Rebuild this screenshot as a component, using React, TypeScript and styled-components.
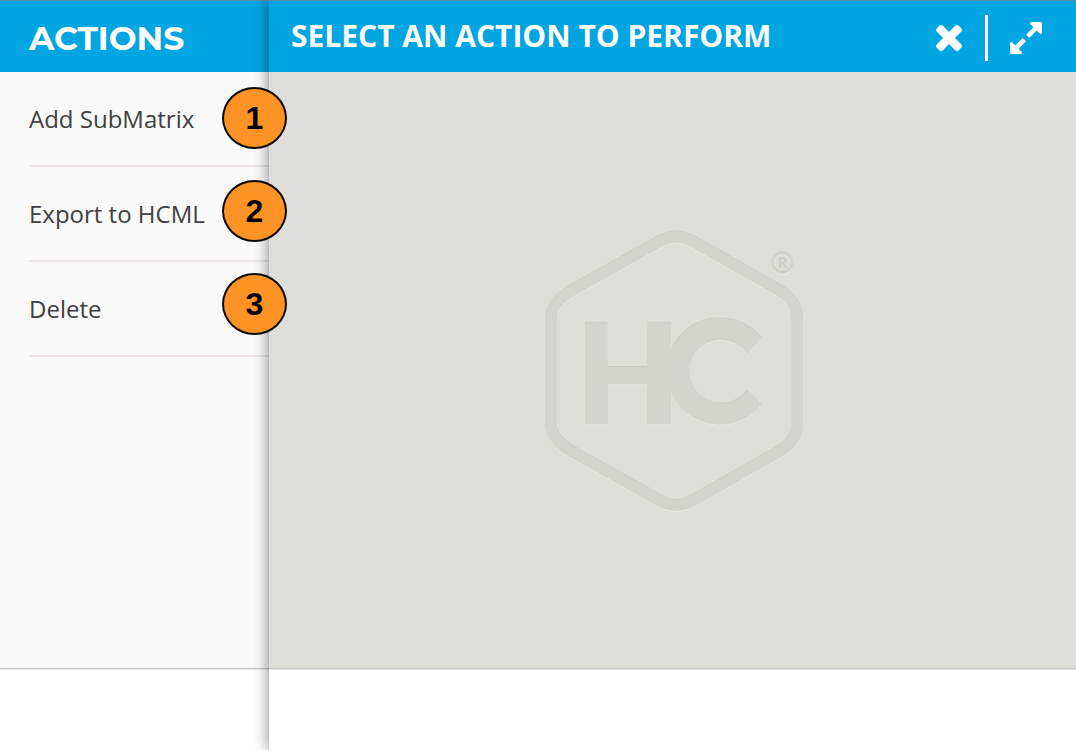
import React from "react";
import styled, { createGlobalStyle } from "styled-components";

const GlobalStyle = createGlobalStyle`
  *, *::before, *::after { box-sizing: border-box; }
  body {
    margin: 0;
    background: #ffffff;
    font-family: "Open Sans", "Noto Sans", sans-serif;
  }
`;

const Page = styled.div`
  display: grid;
  grid-template-columns: 25% 1fr;
  min-height: 100vh;
`;

const Column = styled.div`
  position: relative;
  display: flex;
  flex-direction: column;
`;

const Panel = styled(Column).attrs({ as: "main" })`
  z-index: 1;
  box-shadow: 0 0 14px rgba(0, 0, 0, 0.5);
`;

const Header = styled.header`
  display: flex;
  align-items: center;
  justify-content: space-between;
  height: 72px;
  border-top: 1px solid #5f8c9c;
  background: #00a5e1;
  color: #ffffff;
`;

const SidebarHeader = styled(Header)`
  padding: 3px 0 0 29px;
`;

const PanelHeader = styled(Header)`
  padding: 0 34px 0 22px;
`;

const SidebarTitle = styled.h1`
  margin: 0;
  font: 700 33px/40px Montserrat, Lato, sans-serif;
`;

const PanelTitle = styled.h2`
  margin: 0;
  padding-bottom: 2px;
  font-size: 30px;
  line-height: 40px;
  font-weight: 700;
  white-space: nowrap;
`;

const Body = styled.div<{ $tone: string }>`
  flex: 1;
  min-height: 420px;
  border-bottom: 1px solid #c8c8c8;
  background: ${({ $tone }) => $tone};
`;

const Stage = styled(Body)`
  display: flex;
  align-items: center;
  justify-content: center;
  padding: 2px 0 0 5px;
`;

const Footer = styled.footer`
  height: 81px;
  border-top: 1px solid #e6e6e6;
  background: #ffffff;
`;

const ActionList = styled.ul`
  margin: 0;
  padding: 0 0 0 29px;
  list-style: none;
`;

const ActionItem = styled.li`
  height: 95px;
  border-bottom: 2px solid #ebe3e6;
`;

const ActionButton = styled.button`
  width: 100%;
  height: 100%;
  padding: 0;
  border: 0;
  background: none;
  color: #404040;
  font: 400 24px/32px "Open Sans", "Noto Sans", sans-serif;
  text-align: left;
  cursor: pointer;
`;

const Markers = styled.div`
  position: absolute;
  top: 87px;
  right: -18px;
  z-index: 2;
  display: flex;
  flex-direction: column;
  gap: 31px;
`;

const Marker = styled.span`
  display: flex;
  align-items: center;
  justify-content: center;
  width: 65px;
  height: 62px;
  border: 2px solid #0c0804;
  border-radius: 50%;
  background: #ff9326;
  color: #000000;
  font: 700 32px/32px "Liberation Sans", Arial, sans-serif;
`;

const Tools = styled.div`
  display: flex;
  align-items: center;
  padding-top: 2px;
`;

const IconButton = styled.button`
  display: flex;
  padding: 0;
  border: 0;
  background: none;
  color: inherit;
  cursor: pointer;
`;

const Divider = styled.span`
  width: 3px;
  height: 46px;
  margin: 0 22px 0 23px;
  background: #ffffff;
`;

const CloseIcon = () => (
  <svg width="26" height="26" viewBox="302 366 1188 1188" fill="currentColor" aria-hidden="true">
    <path d="M1490 1322q0 40-28 68l-136 136q-28 28-68 28t-68-28l-294-294-294 294q-28 28-68 28t-68-28l-136-136q-28-28-28-68t28-68l294-294-294-294q-28-28-28-68t28-68l136-136q28-28 68-28t68 28l294 294 294-294q28-28 68-28t68 28l136 136q28 28 28 68t-28 68l-294 294 294 294q28 28 28 68z" />
  </svg>
);

const ExpandIcon = () => (
  <svg width="32" height="32" viewBox="128 128 1536 1536" fill="currentColor" aria-hidden="true">
    <path d="M883 1056q0 13-10 23l-332 332 144 144q19 19 19 45t-19 45-45 19h-448q-26 0-45-19t-19-45v-448q0-26 19-45t45-19 45 19l144 144 332-332q10-10 23-10t23 10l114 114q10 10 10 23zm781-864v448q0 26-19 45t-45 19-45-19l-144-144-332 332q-10 10-23 10t-23-10l-114-114q-10-10-10-23t10-23l332-332-144-144q-19-19-19-45t19-45 45-19h448q26 0 45 19t19 45z" />
  </svg>
);

/* One layer of the embossed emblem: hexagon, monogram and registered ring. */
const EmblemLayer = ({ color, shift }: { color: string; shift: number }) => (
  <g transform={`translate(0 ${shift})`} fill={color} stroke="none">
    <path
      d="M20.7 97Q21.5 81.6 41 70L129.5 20.5Q146 11 163 20.5L251 70.5Q267 81 267.3 97V203Q267 219 251 229.5L163 279.5Q146 289 129.5 279.5L41 230Q21.5 218.4 20.7 203Z"
      fill="none"
      stroke={color}
      strokeWidth="11.4"
    />
    <path d="M55.3 101.5H77.3V145.7H117V101.5H141V203.2H117V163.2H77.7V203.2H55.3Z" />
    <path d="M231.3 116.7A53.3 53.3 0 1 0 231.3 183.7L216.7 169.3A31.8 31.8 0 1 1 217.5 133.2Z" />
    <circle cx="252.3" cy="42" r="9.8" fill="none" stroke={color} strokeWidth="2" />
  </g>
);

const Emblem = () => (
  <svg width="290" height="300" viewBox="0 0 290 300" role="img" aria-label="HC">
    <EmblemLayer color="#e9e9e6" shift={1} />
    <EmblemLayer color="#cacbc4" shift={-0.6} />
    <EmblemLayer color="#d3d4cd" shift={0.2} />
    <text
      x="252.5"
      y="47"
      textAnchor="middle"
      fill="#cecfc8"
      fontFamily="Lato, sans-serif"
      fontWeight="900"
      fontSize="15"
    >
      R
    </text>
  </svg>
);

const actions = ["Add SubMatrix", "Export to HCML", "Delete"];

export default function App() {
  return (
    <>
      <GlobalStyle />
      <Page>
        <Column>
          <SidebarHeader>
            <SidebarTitle>ACTIONS</SidebarTitle>
          </SidebarHeader>
          <Body $tone="#fafafa">
            <ActionList>
              {actions.map((label) => (
                <ActionItem key={label}>
                  <ActionButton type="button">{label}</ActionButton>
                </ActionItem>
              ))}
            </ActionList>
          </Body>
          <Footer />
          <Markers>
            {actions.map((label, index) => (
              <Marker key={label}>{index + 1}</Marker>
            ))}
          </Markers>
        </Column>
        <Panel>
          <PanelHeader>
            <PanelTitle>SELECT AN ACTION TO PERFORM</PanelTitle>
            <Tools>
              <IconButton type="button" aria-label="Close">
                <CloseIcon />
              </IconButton>
              <Divider />
              <IconButton type="button" aria-label="Expand">
                <ExpandIcon />
              </IconButton>
            </Tools>
          </PanelHeader>
          <Stage $tone="#ddded9">
            <Emblem />
          </Stage>
          <Footer />
        </Panel>
      </Page>
    </>
  );
}
